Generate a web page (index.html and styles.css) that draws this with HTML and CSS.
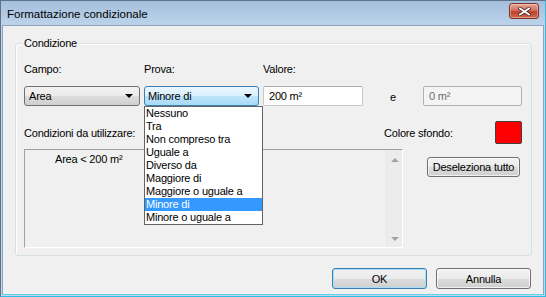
FILE: index.html
```html
<!DOCTYPE html>
<html lang="it">
<head>
    <meta charset="UTF-8">
    <title>Formattazione condizionale</title>
    <link rel="stylesheet" href="styles.css">
</head>
<body>

    <div class="window">
        <!-- Title bar -->
        <div class="titlebar">
            <span class="title">Formattazione condizionale</span>
            <button class="close-button" aria-label="Chiudi">
                <svg width="13" height="9" viewBox="0 0 13 9">
                    <path d="M2 1.5 L11 7.5 M11 1.5 L2 7.5" stroke="#4a2a2a" stroke-width="3.4" stroke-linecap="square"/>
                    <path d="M2 1.5 L11 7.5 M11 1.5 L2 7.5" stroke="#ffffff" stroke-width="1.8" stroke-linecap="square"/>
                </svg>
            </button>
        </div>

        <div class="frame">
            <div class="client">

                <div class="group">
                    <div class="group-title">Condizione</div>

                    <div class="row labels">
                        <span class="label-campo">Campo:</span>
                        <span class="label-prova">Prova:</span>
                        <span>Valore:</span>
                    </div>

                    <div class="row controls">
                        <div class="combo combo-campo">
                            <span>Area</span>
                            <span class="arrow"></span>
                        </div>
                        <div class="combo-wrap">
                            <div class="combo combo-prova">
                                <span>Minore di</span>
                                <span class="arrow"></span>
                            </div>
                            <ul class="dropdown">
                                <li>Nessuno</li>
                                <li>Tra</li>
                                <li>Non compreso tra</li>
                                <li>Uguale a</li>
                                <li>Diverso da</li>
                                <li>Maggiore di</li>
                                <li>Maggiore o uguale a</li>
                                <li class="selected">Minore di</li>
                                <li>Minore o uguale a</li>
                            </ul>
                        </div>
                        <div class="textbox textbox-valore">200 m²</div>
                        <span class="and">e</span>
                        <div class="textbox disabled">0 m²</div>
                    </div>

                    <div class="row sub">
                        <span class="label-conditions">Condizioni da utilizzare:</span>
                        <span class="label-color">Colore sfondo:</span>
                        <span class="swatch"></span>
                    </div>

                    <div class="row list-row">
                        <div class="listbox">
                            <div class="list-items">
                                <div class="list-item">Area &lt; 200 m²</div>
                            </div>
                            <div class="scrollbar">
                                <span class="scroll-up"></span>
                                <span class="scroll-down"></span>
                            </div>
                        </div>
                        <button class="btn btn-clear">Deseleziona tutto</button>
                    </div>
                </div>

                <div class="footer">
                    <button class="btn btn-default">OK</button>
                    <button class="btn">Annulla</button>
                </div>

            </div>
        </div>
    </div>

</body>
</html>
```

FILE: styles.css
```css
/* General */
body {
    margin: 0;
    padding: 0;
    font-family: 'Liberation Sans', Arial, sans-serif;
    font-size: 11px;
    letter-spacing: -0.2px;
    color: #000;
    background: #ffffff;
}
button {
    font-family: inherit;
    font-size: inherit;
    letter-spacing: inherit;
    color: inherit;
}

/* Window frame */
.window {
    width: 546px;
    height: 297px;
    box-sizing: border-box;
    border: 1px solid #5f7288;
    border-bottom-color: #27c1e6;
    border-right-color: #39b9dc;
    background: #c2d6ec;
}
.titlebar {
    height: 24px;
    display: flex;
    align-items: center;
    justify-content: space-between;
    padding: 0 6px 0 6px;
    background: linear-gradient(#a4bfdc, #bcd3eb);
}
.title {
    font-size: 11.5px;
    letter-spacing: 0;
    padding-top: 2px;
}
.close-button {
    width: 30px;
    height: 16px;
    margin-top: -4px;
    padding: 0;
    border: 1px solid #7e2f26;
    border-radius: 3px;
    background: linear-gradient(#e7a797 0%, #d5705d 45%, #c0402c 55%, #cf6a4f 100%);
    display: flex;
    align-items: center;
    justify-content: center;
    box-shadow: inset 0 0 0 1px rgba(255, 255, 255, 0.35);
}

.frame {
    padding: 0 1px 1px 1px;
}
.client {
    height: 268px;
    border: 1px solid #8ea4bd;
    border-bottom-color: #5fd0ee;
    background: #f0f0f0;
}

/* Group box */
.group {
    width: 517px;
    box-sizing: border-box;
    margin: 17px 0 0 12px;
    padding: 0 9px 7px 8px;
    border: 1px solid #d5dfe5;
    border-radius: 3px;
    box-shadow: inset 1px 1px 0 #ffffff;
}
.group-title {
    display: inline-block;
    height: 13px;
    line-height: 13px;
    margin: -7px 0 0 -2px;
    padding: 0 2px;
    background: #f0f0f0;
    vertical-align: top;
}
.row {
    display: flex;
}
.labels {
    height: 13px;
    line-height: 13px;
    margin-top: 7px;
}
.label-campo {
    width: 120px;
}
.label-prova {
    width: 119px;
}

/* Controls row */
.controls {
    margin-top: 10px;
    height: 20px;
    align-items: stretch;
}
.combo {
    box-sizing: border-box;
    height: 20px;
    display: flex;
    align-items: center;
    justify-content: space-between;
    padding: 0 6px 0 4px;
    border: 1px solid #707070;
    border-radius: 3px;
    background: linear-gradient(#f2f2f2 0%, #ebebeb 50%, #dddddd 50%, #cfcfcf 100%);
}
.combo-campo {
    width: 116px;
    margin-right: 4px;
}
.combo-wrap {
    position: relative;
    width: 115px;
    margin-right: 4px;
}
.combo-prova {
    width: 115px;
    border-color: #3c7fb1;
    background: linear-gradient(#eaf6fd 0%, #d9f0fc 50%, #bee6fd 50%, #a7d9f5 100%);
    padding-left: 3px;
}
.arrow {
    width: 0;
    height: 0;
    border-left: 4px solid transparent;
    border-right: 4px solid transparent;
    border-top: 4px solid #000;
}
.dropdown {
    position: absolute;
    top: 20px;
    left: 0;
    width: 119px;
    box-sizing: border-box;
    margin: 0;
    padding: 0;
    list-style: none;
    background: #ffffff;
    border: 1px solid #646464;
    z-index: 2;
}
.dropdown li {
    height: 13px;
    line-height: 13px;
    padding-left: 1px;
    white-space: nowrap;
}
.dropdown li.selected {
    background: #3399ff;
    color: #ffffff;
}

.textbox {
    box-sizing: border-box;
    width: 100px;
    height: 20px;
    line-height: 18px;
    padding-left: 5px;
    border: 1px solid #c5c9cf;
    border-top-color: #abadb3;
    border-radius: 2px;
    background: #ffffff;
}
.textbox.disabled {
    width: 99px;
    background: #f4f4f4;
    border-color: #adb2b5;
    color: #6d6d6d;
}
.and {
    width: 60px;
    line-height: 20px;
    text-align: center;
    padding-top: 1px;
}

/* Conditions row */
.sub {
    margin-top: 15px;
    height: 23px;
    align-items: center;
}
.label-conditions {
    width: 360px;
}
.label-color {
    flex: 1;
}
.swatch {
    width: 27px;
    height: 23px;
    box-sizing: border-box;
    border: 1px solid #404040;
    background: #ff0000;
    box-shadow: inset 0 0 0 1px #ffffff;
    border-radius: 2px;
}
.swatch {
    box-shadow: none;
}

.list-row {
    margin-top: 5px;
    align-items: flex-start;
}
.listbox {
    width: 379px;
    height: 99px;
    box-sizing: border-box;
    display: flex;
    border: 1px solid #a0a0a0;
    border-right-color: #ffffff;
    border-bottom-color: #ffffff;
    background: #f0f0f0;
}
.list-items {
    flex: 1;
    padding: 3px 0 0 30px;
}
.list-item {
    height: 13px;
    line-height: 13px;
}
.scrollbar {
    width: 15px;
    display: flex;
    flex-direction: column;
    justify-content: space-between;
    align-items: center;
    padding: 8px 0 6px;
    border-left: 1px solid #e6e6e6;
    background: #ececec;
}
.scroll-up {
    width: 0;
    height: 0;
    border-left: 4px solid transparent;
    border-right: 4px solid transparent;
    border-bottom: 4px solid #a3a3a3;
}
.scroll-down {
    width: 0;
    height: 0;
    border-left: 4px solid transparent;
    border-right: 4px solid transparent;
    border-top: 4px solid #a3a3a3;
}

/* Buttons */
.btn {
    box-sizing: border-box;
    height: 21px;
    padding: 0;
    border: 1px solid #707070;
    border-radius: 3px;
    background: linear-gradient(#f2f2f2 0%, #ebebeb 50%, #dddddd 50%, #cfcfcf 100%);
    box-shadow: inset 0 0 0 1px rgba(255, 255, 255, 0.7);
}
.btn-clear {
    width: 93px;
    height: 20px;
    margin: 8px 0 0 24px;
}
.footer {
    display: flex;
    justify-content: flex-end;
    gap: 9px;
    margin: 12px 12px 0 0;
}
.footer .btn {
    width: 95px;
}
.btn-default {
    border-color: #3c7fb1;
    box-shadow: inset 0 0 0 1px #a4def9;
}
```
